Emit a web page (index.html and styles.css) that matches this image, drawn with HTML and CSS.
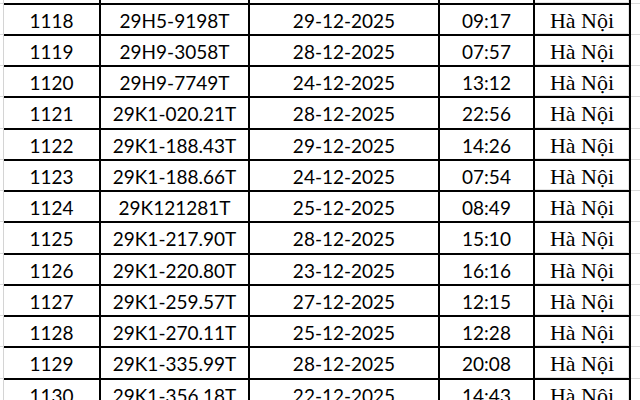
FILE: index.html
```html
<!DOCTYPE html>
<html lang="vi">
<head>
<meta charset="utf-8">
<title>Danh sách</title>
<link rel="stylesheet" href="styles.css">
</head>
<body>
<div class="sheet">
  <div class="row partial"><div class="g"></div><div class="c"></div><div class="c"></div><div class="c"></div><div class="c"></div><div class="c city"></div><div class="e"></div></div>
  <div class="row"><div class="g"></div><div class="c">1118</div><div class="c">29H5-9198T</div><div class="c">29-12-2025</div><div class="c">09:17</div><div class="c city">Hà Nội</div><div class="e"></div></div>
  <div class="row"><div class="g"></div><div class="c">1119</div><div class="c">29H9-3058T</div><div class="c">28-12-2025</div><div class="c">07:57</div><div class="c city">Hà Nội</div><div class="e"></div></div>
  <div class="row"><div class="g"></div><div class="c">1120</div><div class="c">29H9-7749T</div><div class="c">24-12-2025</div><div class="c">13:12</div><div class="c city">Hà Nội</div><div class="e"></div></div>
  <div class="row tall"><div class="g"></div><div class="c">1121</div><div class="c">29K1-020.21T</div><div class="c">28-12-2025</div><div class="c">22:56</div><div class="c city">Hà Nội</div><div class="e"></div></div>
  <div class="row"><div class="g"></div><div class="c">1122</div><div class="c">29K1-188.43T</div><div class="c">29-12-2025</div><div class="c">14:26</div><div class="c city">Hà Nội</div><div class="e"></div></div>
  <div class="row"><div class="g"></div><div class="c">1123</div><div class="c">29K1-188.66T</div><div class="c">24-12-2025</div><div class="c">07:54</div><div class="c city">Hà Nội</div><div class="e"></div></div>
  <div class="row"><div class="g"></div><div class="c">1124</div><div class="c">29K121281T</div><div class="c">25-12-2025</div><div class="c">08:49</div><div class="c city">Hà Nội</div><div class="e"></div></div>
  <div class="row tall"><div class="g"></div><div class="c">1125</div><div class="c">29K1-217.90T</div><div class="c">28-12-2025</div><div class="c">15:10</div><div class="c city">Hà Nội</div><div class="e"></div></div>
  <div class="row"><div class="g"></div><div class="c">1126</div><div class="c">29K1-220.80T</div><div class="c">23-12-2025</div><div class="c">16:16</div><div class="c city">Hà Nội</div><div class="e"></div></div>
  <div class="row"><div class="g"></div><div class="c">1127</div><div class="c">29K1-259.57T</div><div class="c">27-12-2025</div><div class="c">12:15</div><div class="c city">Hà Nội</div><div class="e"></div></div>
  <div class="row"><div class="g"></div><div class="c">1128</div><div class="c">29K1-270.11T</div><div class="c">25-12-2025</div><div class="c">12:28</div><div class="c city">Hà Nội</div><div class="e"></div></div>
  <div class="row tall"><div class="g"></div><div class="c">1129</div><div class="c">29K1-335.99T</div><div class="c">28-12-2025</div><div class="c">20:08</div><div class="c city">Hà Nội</div><div class="e"></div></div>
  <div class="row"><div class="g"></div><div class="c">1130</div><div class="c">29K1-356.18T</div><div class="c">22-12-2025</div><div class="c">14:43</div><div class="c city">Hà Nội</div><div class="e"></div></div>
</div>
</body>
</html>
```
FILE: styles.css
```css
html, body {
  margin: 0;
  padding: 0;
  background: #ffffff;
}
.sheet {
  width: 640px;
  height: 400px;
  overflow: hidden;
  font-family: "Lato", "Open Sans", sans-serif;
  font-size: 19px;
  color: #000;
}
.row {
  display: grid;
  grid-template-columns: 4px 97px 149px 190px 95px 96px 1fr;
  height: 31px;
  box-sizing: border-box;
}
.row.tall { height: 32px; }
.row.partial { height: 3px; }
.row > div {
  box-sizing: border-box;
  text-align: center;
  line-height: 29px;
  padding-top: 1px;
  white-space: nowrap;
  overflow: hidden;
}
.row.partial > div { padding-top: 0; line-height: 3px; }
.g {
  border-top: 1px solid #dadada;
  border-right: 1px solid #d4d4d4;
}
.c {
  border-top: 2px solid #000;
  border-right: 2px solid #000;
}
.row.partial .g, .row.partial .c, .row.partial .e { border-top: 0; }
.city {
  font-family: "Liberation Serif", "Times New Roman", serif;
  font-size: 22px;
  box-shadow: inset -1px -1px 0 #e4e4e4;
}
.e {
  border-top: 1px solid #dadada;
}
```
